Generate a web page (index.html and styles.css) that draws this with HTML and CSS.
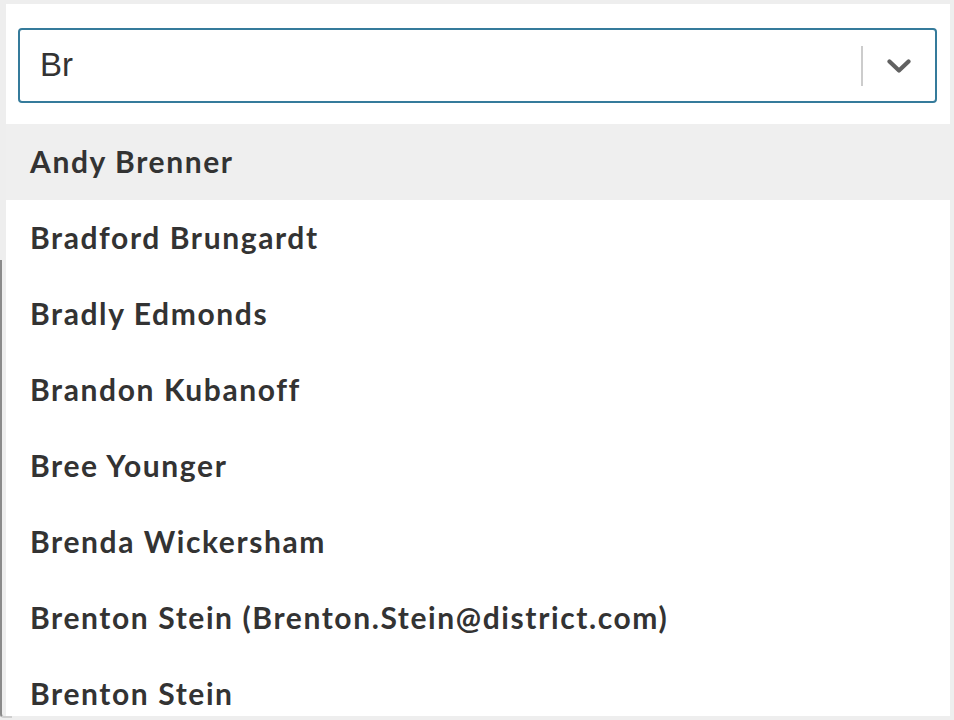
FILE: index.html
```html
<!DOCTYPE html>
<html>
<head>
<meta charset="utf-8">
<link rel="stylesheet" href="styles.css">
</head>
<body>
<div class="backdrop"></div>
<div class="panel">
  <div class="control">
    <div class="value">Br</div>
    <div class="sep"></div>
    <div class="indicator">
      <svg width="24" height="15" viewBox="0 0 24 15"><polyline points="2.5,2.5 12,11.5 21.5,2.5" fill="none" stroke="#616161" stroke-width="4.2" stroke-linecap="round" stroke-linejoin="round"/></svg>
    </div>
  </div>
</div>
<div class="menu">
  <div class="option active">Andy Brenner</div>
  <div class="option">Bradford Brungardt</div>
  <div class="option">Bradly Edmonds</div>
  <div class="option">Brandon Kubanoff</div>
  <div class="option">Bree Younger</div>
  <div class="option">Brenda Wickersham</div>
  <div class="option">Brenton Stein (Brenton.Stein@district.com)</div>
  <div class="option">Brenton Stein</div>
</div>
</body>
</html>
```
FILE: styles.css
```css
html, body {
  margin: 0;
  padding: 0;
  background: #eeeeee;
  width: 954px;
  height: 720px;
  overflow: hidden;
}
body {
  position: relative;
  padding-top: 4px;
  box-sizing: border-box;
}
.backdrop {
  position: absolute;
  left: 0;
  top: 260px;
  width: 12px;
  height: 458px;
  border-left: 2px solid #8a8a8a;
  border-bottom: 2px solid #cfcfcf;
  border-bottom-left-radius: 4px;
  box-sizing: border-box;
  z-index: 0;
}
.panel {
  position: relative;
  z-index: 1;
  margin: 0 4px 0 6px;
  background: #fff;
  padding: 24px 13px 21px 12px;
}
.control {
  display: flex;
  align-items: center;
  height: 75px;
  border: 2px solid #357b9b;
  border-radius: 4px;
  box-sizing: border-box;
}
.value {
  flex: 1;
  padding-left: 20px;
  font-family: "Liberation Sans", Arial, sans-serif;
  font-size: 33px;
  color: #333;
  line-height: 1;
  padding-bottom: 2px;
}
.sep {
  width: 2px;
  height: 40px;
  background: #cccccc;
}
.indicator {
  width: 72px;
  display: flex;
  justify-content: center;
  align-items: center;
  padding-top: 2px;
}
.indicator svg { display: block; }
.menu {
  position: relative;
  z-index: 1;
  margin: 0 4px 0 6px;
  background: #fff;
  height: 592px;
  overflow: hidden;
}
.option {
  height: 76px;
  display: flex;
  align-items: center;
  padding-left: 24px;
  padding-bottom: 2px;
  box-sizing: border-box;
  font-family: Lato, "Noto Sans", sans-serif;
  font-weight: 700;
  font-size: 30px;
  letter-spacing: 1.6px;
  color: #333333;
}
.option.active {
  background: #efefef;
}
```
